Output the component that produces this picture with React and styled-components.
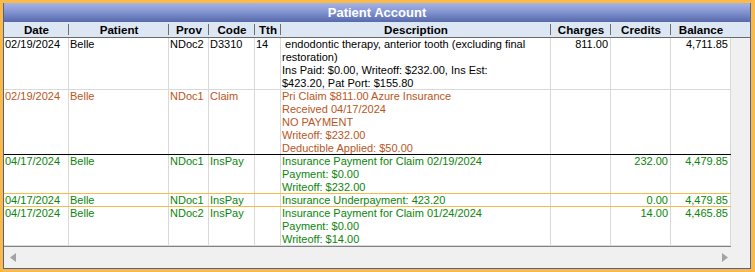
import React from 'react';
import styled, { createGlobalStyle } from 'styled-components';

const COLS = '65px 100px 40px 46px 26px 270px 60px 60px 60px';

const Global = createGlobalStyle`
  html, body { margin: 0; padding: 0; background: #fff; }
  body { font-family: "Liberation Sans", Arial, sans-serif; }
`;

const Frame = styled.div`
  width: 755px;
  height: 272px;
  box-sizing: border-box;
  border-style: solid;
  border-color: #fbb946;
  border-width: 3px 4px 3px 3px;
  display: flex;
`;

const Panel = styled.div`
  flex: 1;
  min-width: 0;
  display: flex;
  flex-direction: column;
  border: 1px solid #4f619e;
  border-top: none;
  background: #f0f0f0;
`;

const Title = styled.div`
  height: 19px;
  line-height: 19px;
  text-align: center;
  color: #fff;
  font-weight: bold;
  font-size: 13px;
  background: linear-gradient(#a6b4e4, #8595d2 45%, #5669ab);
`;

const HeaderRow = styled.div`
  height: 16px;
  box-sizing: border-box;
  display: grid;
  grid-template-columns: ${COLS} 1fr;
  background: #dde6f3;
  border-bottom: 1px solid #6a6a6a;
`;

const HeadCell = styled.div`
  position: relative;
  text-align: center;
  font-weight: bold;
  font-size: 11.6px;
  line-height: 15px;
  color: #000;
  white-space: nowrap;
  &::after {
    content: '';
    display: ${p => (p.$sep ? 'block' : 'none')};
    position: absolute;
    right: 0;
    top: 2px;
    height: 11px;
    width: 1px;
    background: #707070;
  }
`;

const Body = styled.div`
  height: 209px;
  display: flex;
`;

const GridBody = styled.div`
  width: 727px;
  box-sizing: border-box;
  background: #fff;
  border-bottom: 1px solid #828282;
  overflow: hidden;
`;

const Strip = styled.div`
  flex: 1;
  background: #f0f0f0;
`;

const Row = styled.div`
  display: grid;
  grid-template-columns: ${COLS};
  height: ${p => p.$lines * 13}px;
  box-sizing: border-box;
  border-bottom: 1px solid ${p => p.$line};
  color: ${p => p.$color};
  overflow: hidden;
`;

const Cell = styled.div`
  border-right: 1px solid #d9d9d9;
  padding: 0 2px 0 1px;
  font-size: 11px;
  line-height: 13px;
  white-space: pre;
  overflow: hidden;
  text-align: ${p => (p.$right ? 'right' : 'left')};
`;

const HScroll = styled.div`
  height: 21px;
  display: flex;
`;

const HBar = styled.div`
  width: 729px;
  display: flex;
  justify-content: space-between;
  align-items: center;
  padding: 0 5px 0 6px;
  box-sizing: border-box;
  background: #f0f0f0;
`;

const Corner = styled.div`
  flex: 1;
  background: #f0f0f0;
`;

const Arrow = ({ dir }) => (
  <svg width="6" height="9" viewBox="0 0 6 9">
    {dir === 'left' ? (
      <polygon points="6,0 6,9 0,4.5" fill="#a3a3a3" />
    ) : (
      <polygon points="0,0 0,9 6,4.5" fill="#a3a3a3" />
    )}
  </svg>
);

const headers = ['Date', 'Patient', 'Prov', 'Code', 'Tth', 'Description', 'Charges', 'Credits', 'Balance'];

const BLACK = '#000';
const CLAIM = '#b9561d';
const GREEN = '#0a860a';
const GRID = '#d9d9d9';
const SEL = '#fbb946';

const rows = [
  {
    color: BLACK, line: GRID,
    date: '02/19/2024', pat: 'Belle', prov: 'NDoc2', code: 'D3310', tth: '14',
    desc: [' endodontic therapy, anterior tooth (excluding final', 'restoration)', 'Ins Paid: $0.00, Writeoff: $232.00, Ins Est:', '$423.20, Pat Port: $155.80'],
    charges: '811.00', credits: '', balance: '4,711.85',
  },
  {
    color: CLAIM, line: '#000',
    date: '02/19/2024', pat: 'Belle', prov: 'NDoc1', code: 'Claim', tth: '',
    desc: ['Pri Claim $811.00 Azure Insurance', 'Received 04/17/2024', 'NO PAYMENT', 'Writeoff: $232.00', 'Deductible Applied: $50.00'],
    charges: '', credits: '', balance: '',
  },
  {
    color: GREEN, line: SEL,
    date: '04/17/2024', pat: 'Belle', prov: 'NDoc1', code: 'InsPay', tth: '',
    desc: ['Insurance Payment for Claim 02/19/2024', 'Payment: $0.00', 'Writeoff: $232.00'],
    charges: '', credits: '232.00', balance: '4,479.85',
  },
  {
    color: GREEN, line: SEL,
    date: '04/17/2024', pat: 'Belle', prov: 'NDoc1', code: 'InsPay', tth: '',
    desc: ['Insurance Underpayment: 423.20'],
    charges: '', credits: '0.00', balance: '4,479.85',
  },
  {
    color: GREEN, line: GRID,
    date: '04/17/2024', pat: 'Belle', prov: 'NDoc2', code: 'InsPay', tth: '',
    desc: ['Insurance Payment for Claim 01/24/2024', 'Payment: $0.00', 'Writeoff: $14.00'],
    charges: '', credits: '14.00', balance: '4,465.85',
  },
];

export default function App() {
  return (
    <>
      <Global />
      <Frame>
        <Panel>
          <Title>Patient Account</Title>
          <HeaderRow>
            {headers.map((h, i) => (
              <HeadCell key={h} $sep={i < headers.length - 1}>{h}</HeadCell>
            ))}
            <div />
          </HeaderRow>
          <Body>
            <GridBody>
              {rows.map((r, i) => (
                <Row key={i} $lines={r.desc.length} $line={r.line} $color={r.color}>
                  <Cell>{r.date}</Cell>
                  <Cell>{r.pat}</Cell>
                  <Cell>{r.prov}</Cell>
                  <Cell>{r.code}</Cell>
                  <Cell>{r.tth}</Cell>
                  <Cell>{r.desc.join('\n')}</Cell>
                  <Cell $right>{r.charges}</Cell>
                  <Cell $right>{r.credits}</Cell>
                  <Cell $right>{r.balance}</Cell>
                </Row>
              ))}
            </GridBody>
            <Strip />
          </Body>
          <HScroll>
            <HBar>
              <Arrow dir="left" />
              <Arrow dir="right" />
            </HBar>
            <Corner />
          </HScroll>
        </Panel>
      </Frame>
    </>
  );
}
